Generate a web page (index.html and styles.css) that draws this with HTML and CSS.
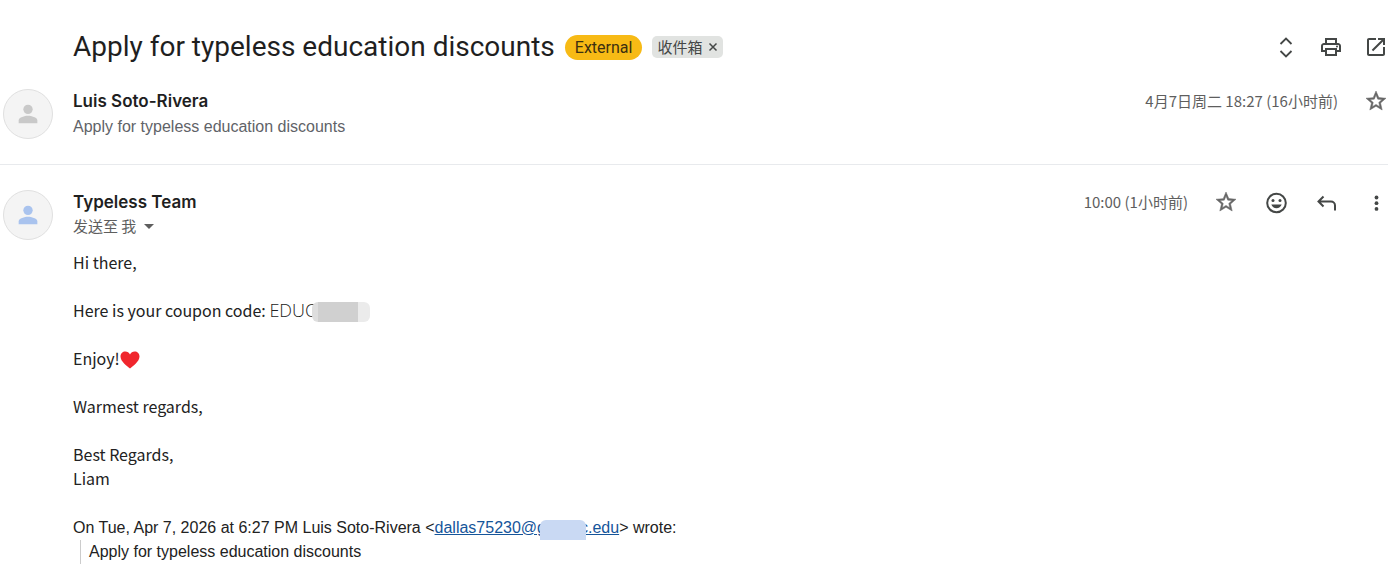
FILE: index.html
```html
<!DOCTYPE html>
<html lang="zh-CN">
  <head>
    <meta charset="UTF-8" />
    <meta name="viewport" content="width=device-width, initial-scale=1.0" />
    <title>Apply for typeless education discounts</title>
    <link rel="stylesheet" href="styles.css">
  </head>
  <body>
    <main class="thread">
      <header class="subject">
        <h1 class="subject-title">Apply for typeless education discounts</h1>
        <span class="tag-external">External</span>
        <span class="tag-label">收件箱<button class="tag-remove" aria-label="移除标签">
          <svg viewBox="0 0 10 10" width="10" height="10"><path d="M1.5 1.5l7 7M8.5 1.5l-7 7" stroke="currentColor" stroke-width="1.5" fill="none" /></svg>
        </button></span>
        <div class="subject-tools">
          <button class="icon-button" aria-label="全部展开">
            <svg viewBox="0 0 24 24"><path d="M6.500 9L12 3.500 17.500 9M6.500 16l5.500 5.500 5.500-5.500" fill="none" stroke="currentColor" stroke-width="1.800" /></svg>
          </button>
          <button class="icon-button" aria-label="打印">
            <svg viewBox="0 0 24 24"><path d="M19 8h-1V3H6v5H5c-1.660 0-3 1.340-3 3v6h4v4h12v-4h4v-6c0-1.660-1.340-3-3-3zM8 5h8v3H8V5zm8 14H8v-4h8v4zm2-4v-2H6v2H4v-4c0-.55.45-1 1-1h14c.55 0 1 .45 1 1v4h-2z" /><circle cx="18" cy="11.500" r="1" /></svg>
          </button>
          <button class="icon-button" aria-label="在新窗口中打开">
            <svg viewBox="0 0 24 24"><path d="M19 19H5V5h7V3H5c-1.110 0-2 .9-2 2v14c0 1.100.89 2 2 2h14c1.100 0 2-.9 2-2v-7h-2v7zM14 3v2h3.590l-9.830 9.830 1.410 1.410L19 6.410V10h2V3h-7z" /></svg>
          </button>
        </div>
      </header>

      <article class="message">
        <div class="avatar">
          <svg viewBox="0 0 24 24"><circle cx="12" cy="8" r="4" /><path d="M4 20v-2.500C4 14.800 9.300 13.500 12 13.500s8 1.300 8 4V20z" /></svg>
        </div>
        <div class="message-content">
          <div class="message-head">
            <div class="sender">Luis Soto-Rivera</div>
            <div class="message-tools">
              <time class="date">4月7日周二 18:27 (16小时前)</time>
              <button class="icon-button icon-star" aria-label="加星标">
                <svg viewBox="0 0 24 24"><path d="M22 9.240l-7.190-.62L12 2 9.190 8.630 2 9.240l5.460 4.730L5.820 21 12 17.270 18.180 21l-1.630-7.030L22 9.240zM12 15.400l-3.760 2.270 1-4.280-3.320-2.880 4.380-.38L12 6.100l1.710 4.040 4.380.38-3.320 2.880 1 4.280L12 15.400z" /></svg>
              </button>
            </div>
          </div>
          <div class="snippet">Apply for typeless education discounts</div>
        </div>
      </article>

      <article class="message">
        <div class="avatar avatar-blue">
          <svg viewBox="0 0 24 24"><circle cx="12" cy="8" r="4" /><path d="M4 20v-2.500C4 14.800 9.300 13.500 12 13.500s8 1.300 8 4V20z" /></svg>
        </div>
        <div class="message-content">
          <div class="message-head">
            <div class="sender">Typeless Team</div>
            <div class="message-tools">
              <time class="date">10:00 (1小时前)</time>
              <button class="icon-button icon-star" aria-label="加星标">
                <svg viewBox="0 0 24 24"><path d="M22 9.240l-7.190-.62L12 2 9.190 8.630 2 9.240l5.460 4.730L5.820 21 12 17.270 18.180 21l-1.630-7.030L22 9.240zM12 15.400l-3.760 2.270 1-4.280-3.320-2.880 4.380-.38L12 6.100l1.710 4.040 4.380.38-3.320 2.880 1 4.280L12 15.400z" /></svg>
              </button>
              <button class="icon-button" aria-label="添加回应">
                <svg viewBox="0 0 24 24"><circle cx="12.500" cy="13" r="9.300" fill="none" stroke="currentColor" stroke-width="2" /><circle cx="9" cy="10.500" r="1.500" /><circle cx="16" cy="10.500" r="1.500" /><path d="M7.300 14.500h10.400c-.8 2.300-2.800 3.800-5.200 3.800s-4.400-1.500-5.200-3.800z" /></svg>
              </button>
              <button class="icon-button" aria-label="回复">
                <svg viewBox="0 0 24 24"><path d="M9.500 6.500l-5 5 5 5M5 11.500h12c2.200 0 4 1.800 4 4v5" fill="none" stroke="currentColor" stroke-width="2" /></svg>
              </button>
              <button class="icon-button" aria-label="更多">
                <svg viewBox="0 0 24 24"><circle cx="12.500" cy="7.500" r="1.900" /><circle cx="12.500" cy="13.200" r="1.900" /><circle cx="12.500" cy="18.900" r="1.900" /></svg>
              </button>
            </div>
          </div>
          <button class="recipient">发送至 我
            <svg viewBox="0 0 10 5" width="10" height="5"><path d="M0 0h10L5 5z" fill="currentColor" /></svg>
          </button>

          <div class="message-body">
            <p>Hi there,</p>
            <p>Here is your coupon code: <span class="coupon">EDUC</span><span class="redacted"></span></p>
            <p>Enjoy!<svg class="heart" role="img" aria-label="爱心" viewBox="0 0 20 18"><path d="M10 17.500C7 15 .5 10.500.5 5.500.5 2.500 2.700.5 5.300.5 7.400.5 9.100 1.700 10 3.400 10.900 1.700 12.600.5 14.700.5c2.600 0 4.800 2 4.800 5 0 5-6.500 9.500-9.500 12z" /></svg></p>
            <p>Warmest regards,</p>
            <p>Best Regards,<br>Liam</p>
          </div>

          <div class="quote">
            <div>On Tue, Apr 7, 2026 at 6:27 PM Luis Soto-Rivera &lt;<a class="address" href="#">dallas75230@g<span class="redacted-mail"></span>c.edu</a>&gt; wrote:</div>
            <blockquote>Apply for typeless education discounts</blockquote>
          </div>
        </div>
      </article>
    </main>
  </body>
</html>
```

FILE: styles.css
```css
* {
  box-sizing: border-box;
}
body {
  margin: 0;
  background-color: #fff;
  color: #222;
  font-family: "Liberation Sans", Arial, "Noto Sans CJK SC", sans-serif;
  font-size: 16px;
  line-height: 24px;
}
button {
  border: none;
  padding: 0;
  background: none;
  font: inherit;
  color: inherit;
  cursor: pointer;
}
.thread {
  margin-right: 9px;
}

/* subject line */
.subject {
  display: flex;
  align-items: center;
  padding: 27px 0 0 73px;
}
.subject-title {
  margin: 0 10px 0 0;
  font-family: Roboto, sans-serif;
  font-size: 28px;
  font-weight: 400;
  line-height: 40px;
  color: #1f1f1f;
}
.tag-external {
  padding: 0 10px;
  border-radius: 13px;
  background-color: #f7ba15;
  color: #3c3010;
  font-family: Roboto, sans-serif;
  font-size: 16px;
  line-height: 25px;
}
.tag-label {
  display: flex;
  align-items: center;
  gap: 6px;
  margin-left: 10px;
  padding: 0 5px;
  border-radius: 5px;
  background-color: #e1e3e1;
  color: #444746;
  font-family: "Noto Sans CJK SC", sans-serif;
  font-size: 15px;
  line-height: 22px;
}
.tag-remove {
  display: flex;
}
.subject-tools {
  display: flex;
  gap: 21px;
  margin-left: auto;
}
.icon-button {
  display: flex;
  align-items: center;
  justify-content: center;
  width: 24px;
  height: 24px;
  color: #444746;
}
.icon-button svg {
  width: 24px;
  height: 24px;
  fill: currentColor;
}
.icon-star {
  color: #666;
}
.icon-star svg {
  stroke: currentColor;
  stroke-width: 0.5px;
}

/* messages */
.message {
  display: flex;
  gap: 20px;
  padding: 22px 0 25px 3px;
}
.message + .message {
  border-top: 1px solid #e8eaed;
  padding-top: 25px;
}
.avatar {
  display: flex;
  flex: none;
  align-items: center;
  justify-content: center;
  width: 50px;
  height: 50px;
  border: 1px solid #e0e0e0;
  border-radius: 50%;
  background-color: #f4f4f4;
  fill: #c9c9c9;
}
.avatar-blue {
  fill: #a9c3ee;
}
.avatar svg {
  width: 28px;
  height: 28px;
}
.message-content {
  flex: 1;
}
.message-head {
  display: flex;
  align-items: center;
  justify-content: space-between;
}
.sender {
  font-family: Inter, sans-serif;
  font-size: 17px;
  font-weight: 600;
  color: #1f1f1f;
}
.message-tools {
  display: flex;
  align-items: center;
  gap: 26px;
}
.date {
  font-family: "Noto Sans CJK SC", sans-serif;
  font-size: 15px;
  line-height: 22px;
  color: #5e5e5e;
}
.snippet {
  padding-top: 2px;
  color: #5f6368;
}
.recipient {
  display: flex;
  align-items: center;
  gap: 8px;
  font-family: "Noto Sans CJK SC", sans-serif;
  font-size: 15px;
  color: #5e5e5e;
}

/* mail text */
.message-body {
  margin-top: 12px;
  font-family: "Noto Sans CJK SC", sans-serif;
  font-size: 16px;
}
.message-body p {
  margin: 0 0 24px;
}
.coupon {
  font-family: "Open Sans", sans-serif;
  font-size: 18px;
  font-weight: 300;
  line-height: 20px;
}
.redacted {
  display: inline-block;
  width: 58px;
  height: 20px;
  margin-left: -4px;
  border-radius: 6px;
  background: linear-gradient(90deg, #dedede 6px, #d0d0d0 6px, #d0d0d0 46px, #ebebeb 46px);
  vertical-align: -5px;
}
.heart {
  width: 20px;
  height: 18px;
  vertical-align: -4px;
  fill: #f0262d;
}
.quote {
  margin-top: 26px;
}
.quote blockquote {
  margin: 0 0 0 7px;
  padding-left: 8px;
  border-left: 1px solid #ccc;
}
.address {
  color: #15559a;
}
/* sits over the letters on both sides */
.redacted-mail {
  display: inline-block;
  position: relative;
  width: 46px;
  height: 20px;
  margin: 0 -6px 0 -6px;
  border-radius: 6px 6px 0 0;
  background-color: #c9d9f3;
  vertical-align: -7px;
}
```
